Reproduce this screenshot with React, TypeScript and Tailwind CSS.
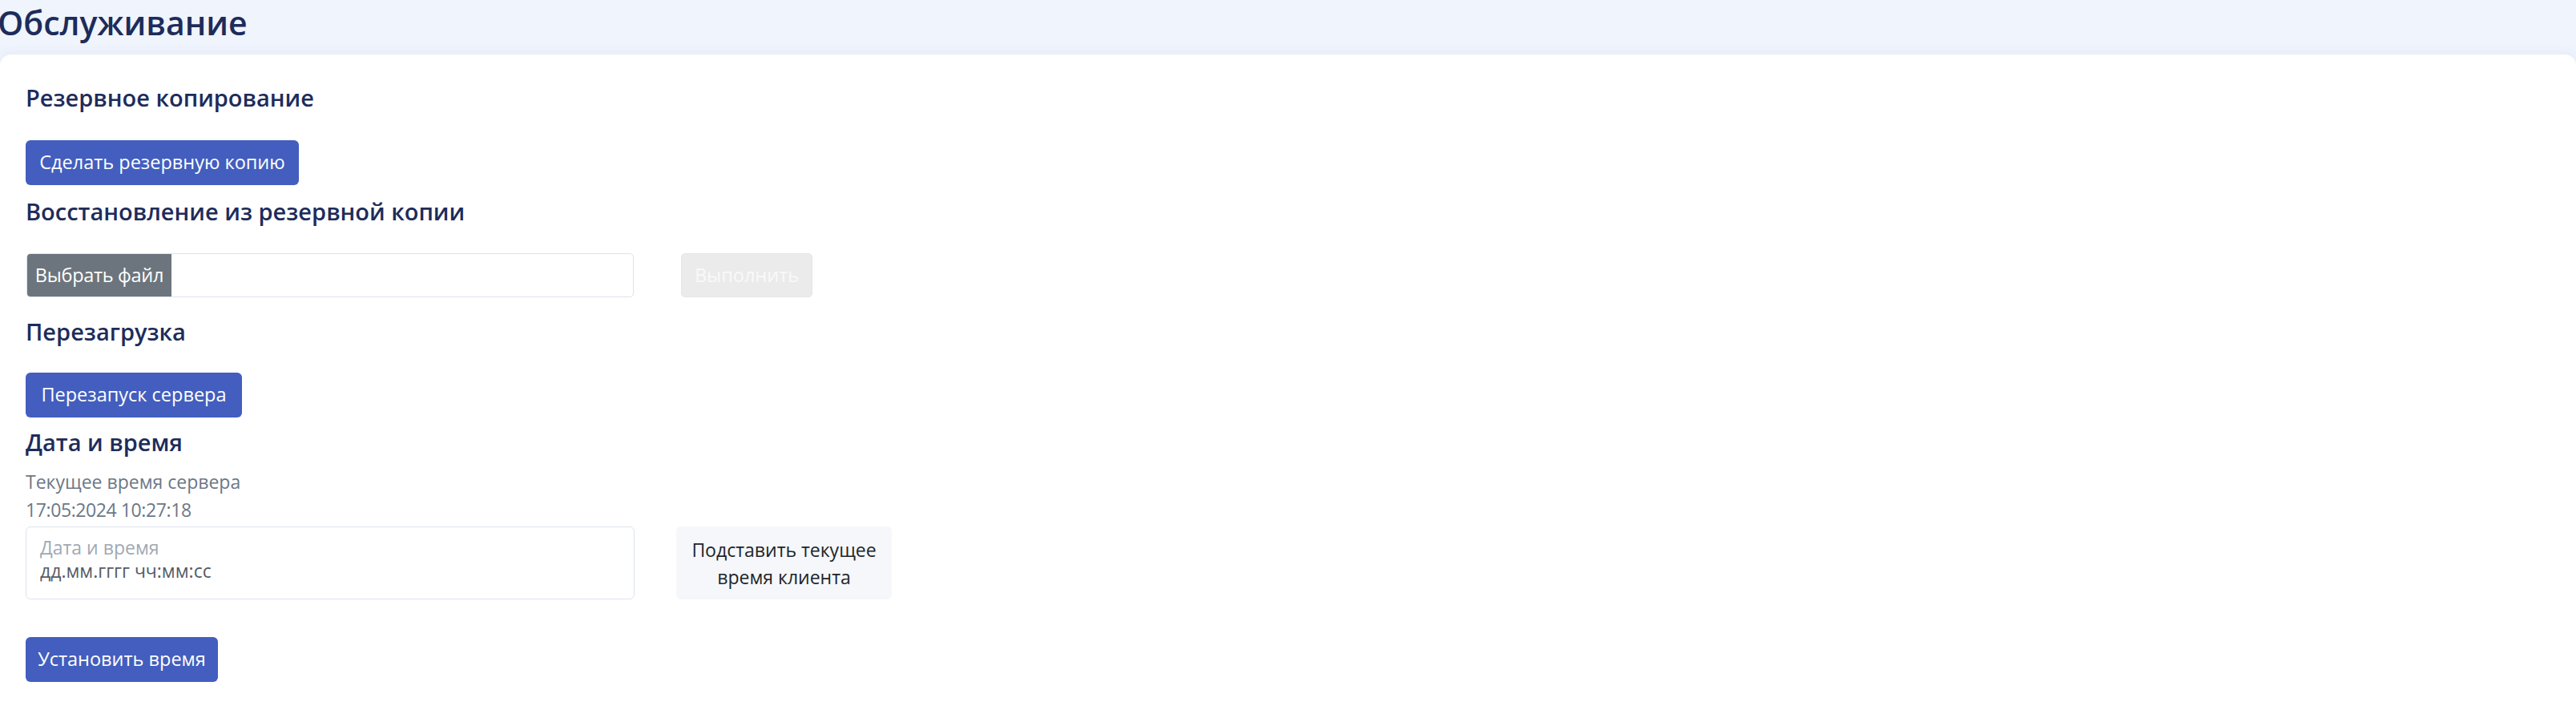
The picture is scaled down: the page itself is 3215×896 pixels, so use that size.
import React from 'react';

const App = () => {
  return (
    <div className="min-h-screen flex flex-col bg-[#f0f4fd] font-['Open_Sans','Noto_Sans',sans-serif]">
      {/* Page title */}
      <header className="h-[68px] shrink-0 pt-[3px]">
        <h1 className="-ml-[3px] text-[41px] leading-[50px] font-semibold text-[#1d2c5b]">Обслуживание</h1>
      </header>

      {/* Card */}
      <main className="flex-1 bg-white rounded-t-[14px] shadow-[0_-3px_14px_rgba(40,70,140,0.06)] pl-[32px] pt-[37px] pb-[40px]">
        <h2 className="text-[29px] leading-[34px] font-semibold text-[#1d2c5b] mb-[36px]">Резервное копирование</h2>
        <button className="w-[341px] h-[56px] rounded-[6px] bg-[#435ebe] text-white text-[23.5px] flex items-center justify-center mb-[16px]">
          Сделать резервную копию
        </button>

        <h2 className="text-[29px] leading-[34px] font-semibold text-[#1d2c5b] mb-[35px]">Восстановление из резервной копии</h2>
        <div className="flex items-center gap-[59px] mb-[26px] pl-[1px]">
          <div className="w-[758px] h-[55px] flex border border-[#dde4ee] rounded-[5px] overflow-hidden">
            <span className="w-[180px] h-full bg-[#6c757d] text-white text-[23.5px] tracking-[-0.3px] flex items-center justify-center">Выбрать файл</span>
            <span className="flex-1" />
          </div>
          <button disabled className="w-[164px] h-[55px] rounded-[5px] bg-[#ebebeb] border border-[#e6e6e6] text-[#f9f9f9] text-[23.5px] flex items-center justify-center">
            Выполнить
          </button>
        </div>

        <h2 className="text-[29px] leading-[34px] font-semibold text-[#1d2c5b] mb-[34px]">Перезагрузка</h2>
        <button className="w-[270px] h-[56px] rounded-[6px] bg-[#435ebe] text-white text-[23.5px] flex items-center justify-center mb-[14px]">
          Перезапуск сервера
        </button>

        <h2 className="text-[29px] leading-[34px] font-semibold text-[#1d2c5b] mb-[15px]">Дата и время</h2>
        <p className="text-[23px] leading-[35px] text-[#6b7888]">Текущее время сервера</p>
        <p className="text-[23px] leading-[35px] tracking-[-0.4px] text-[#6b7888]">17:05:2024 10:27:18</p>

        <div className="flex gap-[52px] mt-[3px]">
          <div className="w-[760px] h-[91px] border border-[#dde4ee] rounded-[6px] pl-[17px] pt-[10px]">
            <div className="text-[23px] leading-[30px] text-[#a1a9b3]">Дата и время</div>
            <div className="text-[23px] leading-[28px] text-[#555c66]">дд.мм.гггг чч:мм:сс</div>
          </div>
          <button className="w-[269px] h-[91px] rounded-[6px] bg-[#f5f7fa] text-[#212529] text-[23px] leading-[34px] flex items-center justify-center text-center">
            Подставить текущее
            <br />
            время клиента
          </button>
        </div>

        <button className="mt-[47px] w-[240px] h-[56px] rounded-[6px] bg-[#435ebe] text-white text-[23.5px] flex items-center justify-center">
          Установить время
        </button>
      </main>
    </div>
  );
};

export default App;
